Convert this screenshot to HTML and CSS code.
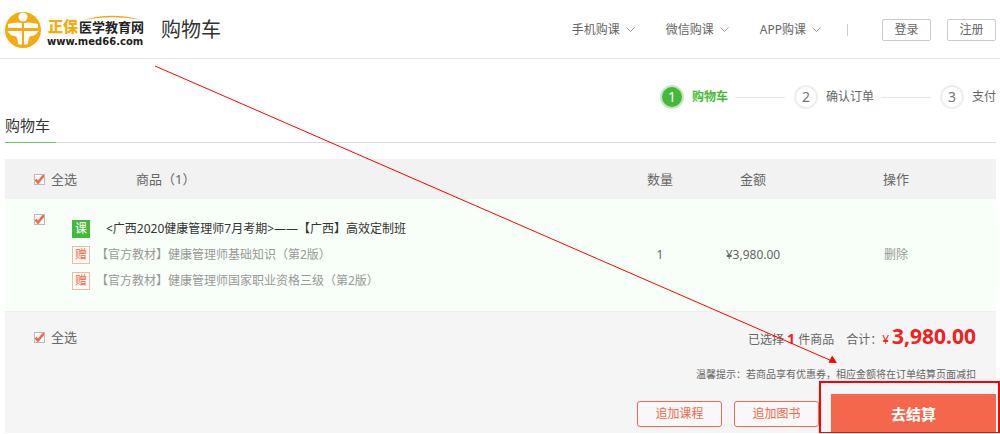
FILE: index.html
```html
<!DOCTYPE html>
<html lang="zh-CN">
<head>
<meta charset="utf-8">
<title>购物车</title>
<meta name="viewport" content="width=device-width, initial-scale=1">
<link rel="stylesheet" href="styles.css">
</head>
<body>
<header class="header">
  <a class="logo" href="#">
    <svg width="140" height="40" viewBox="0 0 140 40" role="img" aria-label="正保医学教育网">
      <circle cx="18" cy="20" r="18" fill="#f5ab0c"/>
      <circle cx="18" cy="7" r="4.500" fill="#fff"/>
      <path d="M3 14 Q8 12.500 13 12.500 Q18 14 23 12.500 Q28 12.500 33 14 V18 H3Z" fill="#fff"/>
      <path d="M2.500 21 H33.500 Q31 26 24.500 26.500 Q23.500 30 22.500 34.500 H13.500 Q12.500 30 11.500 26.500 Q5 26 2.500 21Z" fill="#fff"/>
      <path d="M18 12V36M1 19.500H35" stroke="#f5ab0c" stroke-width="2"/>
      <path d="M75 11 Q105 1 137 10 Q105 4 75 11Z" fill="#f5ab0c"/>
      <text class="logo-brand" x="43" y="22">正保</text>
      <text class="logo-name" x="74" y="22">医学教育网</text>
      <text class="logo-url" x="42" y="35">www.med66.com</text>
    </svg>
  </a>
  <h1 class="header-title">购物车</h1>
  <nav class="nav">
    <a class="nav-link" href="#">手机购课<svg width="9" height="6" viewBox="0 0 9 6"><path d="M.5.5l4 4 4-4"/></svg></a>
    <a class="nav-link" href="#">微信购课<svg width="9" height="6" viewBox="0 0 9 6"><path d="M.5.5l4 4 4-4"/></svg></a>
    <a class="nav-link" href="#">APP购课<svg width="9" height="6" viewBox="0 0 9 6"><path d="M.5.5l4 4 4-4"/></svg></a>
  </nav>
  <div class="account">
    <button class="account-button" type="button">登录</button>
    <button class="account-button" type="button">注册</button>
  </div>
</header>

<main class="page">
  <ol class="steps">
    <li class="step step-active"><span class="step-number">1</span>购物车</li>
    <li class="step"><span class="step-number">2</span>确认订单</li>
    <li class="step"><span class="step-number">3</span>支付</li>
  </ol>

  <div class="section-head"><h2 class="section-title">购物车</h2></div>

  <table class="cart">
    <colgroup>
      <col class="col-check"><col class="col-gap"><col><col class="col-count"><col class="col-price"><col class="col-action">
    </colgroup>
    <thead>
      <tr>
        <th class="cell-left" colspan="2"><label class="check"><input type="checkbox" checked>全选</label></th>
        <th class="cell-name">商品（1）</th>
        <th>数量</th>
        <th>金额</th>
        <th class="cell-action">操作</th>
      </tr>
    </thead>
    <tbody>
      <tr>
        <td class="cell-left cell-top"><input type="checkbox" checked aria-label="选择商品"></td>
        <td class="cell-products" colspan="2">
          <ul class="products">
            <li class="product product-main"><span class="tag tag-course">课</span><a href="#">&lt;广西2020健康管理师7月考期&gt;——【广西】高效定制班</a></li>
            <li class="product"><span class="tag">赠</span><span>【官方教材】健康管理师基础知识（第2版）</span></li>
            <li class="product"><span class="tag">赠</span><span>【官方教材】健康管理师国家职业资格三级（第2版）</span></li>
          </ul>
        </td>
        <td>1</td>
        <td>¥3,980.00</td>
        <td class="cell-action"><button class="remove" type="button">删除</button></td>
      </tr>
    </tbody>
  </table>

  <section class="summary">
    <label class="check"><input type="checkbox" checked>全选</label>
    <div class="checkout">
      <p class="total"><span>已选择 <b class="count">1</b> 件商品</span><span class="sum">合计：<span class="currency">¥</span><strong class="amount">3,980.00</strong></span></p>
      <p class="tip">温馨提示：若商品享有优惠券，相应金额将在订单结算页面减扣</p>
      <div class="actions">
        <button class="add" type="button">追加课程</button>
        <button class="add" type="button">追加图书</button>
        <div class="pay-wrap"><button class="pay" type="button">去结算</button></div>
      </div>
    </div>
  </section>
</main>

<svg class="pointer" width="1000" height="434" viewBox="0 0 1000 434" aria-hidden="true">
  <path d="M155 66L832 361" stroke="#f00" stroke-width="1"/>
  <path d="M837 363l-8.500-.3 3.600-7.200z" fill="#f00"/>
</svg>
</body>
</html>
```

FILE: styles.css
```css
* {
  box-sizing: border-box;
}

body {
  position: relative;
  margin: 0;
  background: #fff;
  color: #666;
  font: 12px/18px "Noto Sans", "Noto Sans CJK SC", sans-serif;
}

h1, h2, p, ul, ol {
  margin: 0;
  padding: 0;
  font-weight: 400;
  list-style: none;
}

a {
  color: inherit;
  text-decoration: none;
}

button {
  padding: 0;
  font: inherit;
  cursor: pointer;
}

/* Header */
.header {
  display: flex;
  align-items: center;
  height: 59px;
  padding: 2px 4px 0 5px;
  border-bottom: 1px solid #e8e8e8;
}

.logo svg {
  display: block;
}

.logo-brand {
  fill: #f5ab0c;
  font: 900 15px "Noto Sans CJK SC", sans-serif;
}

.logo-name {
  fill: #222;
  font: 700 13px "Noto Sans CJK SC", sans-serif;
}

.logo-url {
  fill: #222;
  font: 700 10px "DejaVu Sans", sans-serif;
}

.header-title {
  margin-left: 16px;
  color: #333;
  font-size: 20px;
  line-height: 28px;
}

.nav {
  display: flex;
  gap: 31px;
  margin-left: auto;
}

.nav-link {
  display: flex;
  align-items: center;
  gap: 6px;
}

.nav-link path {
  fill: none;
  stroke: #999;
}

.account {
  display: flex;
  align-items: center;
  gap: 16px;
  margin-left: 26px;
}

.account::before {
  width: 1px;
  height: 12px;
  margin-right: 18px;
  background: #ccc;
  content: "";
}

.account-button {
  width: 49px;
  height: 22px;
  border: 1px solid #ccc;
  border-radius: 2px;
  background: #fff;
  color: #666;
}

/* Order steps */
.page {
  padding: 0 4px 0 5px;
}

.steps {
  display: flex;
  justify-content: flex-end;
  padding-top: 25px;
}

.step {
  display: flex;
  align-items: center;
  height: 26px;
}

.step + .step::before {
  width: 50px;
  height: 1px;
  margin: 0 9px 0 7px;
  background: #e8e8e8;
  content: "";
}

.step-number {
  width: 24px;
  height: 24px;
  margin-right: 8px;
  border: 2px solid #eee;
  border-radius: 50%;
  color: #777;
  font-size: 14px;
  line-height: 20px;
  text-align: center;
}

.step-active {
  color: #4b3;
  font-weight: 700;
}

.step-active .step-number {
  border-color: #c4e8c0;
  background: #45b83c;
  color: #fff;
  font-weight: 400;
}

.section-head {
  display: flex;
  margin-top: 3px;
  border-bottom: 1px solid #ddd;
}

.section-title {
  margin-bottom: -1px;
  padding: 0 6px 5px 0;
  border-bottom: 1px solid #6c6;
  color: #333;
  font-size: 15px;
  line-height: 24px;
}

/* Cart table */
.cart {
  width: 100%;
  margin-top: 16px;
  border-collapse: collapse;
  table-layout: fixed;
  text-align: center;
}

.col-check { width: 67px; }
.col-gap { width: 64px; }
.col-count { width: 92px; }
.col-price { width: 94px; }
.col-action { width: 196px; }

.cart th {
  height: 40px;
  padding: 0;
  background: #f2f2f2;
  font-size: 13px;
  font-weight: 400;
}

.cart td {
  height: 112px;
  padding: 0;
  background: #f8fff8;
}

.cart .cell-left {
  padding-left: 29px;
  text-align: left;
}

.cart .cell-top {
  padding-top: 15px;
  line-height: 12px;
  vertical-align: top;
}

.cart .cell-name,
.cart .cell-products {
  text-align: left;
}

.cart .cell-action {
  padding-right: 4px;
}

input[type="checkbox"] {
  width: 11px;
  height: 11px;
  margin: 0;
  border: 1px solid #bbb;
  background: #fff url("data:image/svg+xml,%3Csvg xmlns='http://www.w3.org/2000/svg' viewBox='0 0 11 11'%3E%3Cpath d='M1.500 5.500L4 8.500 10.500 .5' fill='none' stroke='%23f5674c' stroke-width='2.600'/%3E%3C/svg%3E") center / 11px 11px no-repeat border-box;
  appearance: none;
}

input[type="checkbox"]:not(:checked) {
  background-image: none;
}

.check {
  display: inline-flex;
  align-items: center;
  gap: 6px;
  font-size: 13px;
  line-height: 20px;
}

.products {
  display: grid;
  gap: 8px;
}

.product {
  display: flex;
  align-items: center;
  gap: 6px;
  color: #999;
}

.product-main {
  gap: 16px;
  color: #333;
}

.tag {
  width: 18px;
  height: 18px;
  border: 1px solid #f9b5a6;
  color: #f5674c;
  line-height: 16px;
  text-align: center;
}

.tag-course {
  border-color: #45b83c;
  background: #45b83c;
  color: #fff;
}

.remove {
  border: 0;
  background: none;
  color: #999;
}

/* Totals and actions */
.summary {
  display: flex;
  align-items: flex-start;
  justify-content: space-between;
  padding: 12px 0 0 29px;
  border-top: 1px solid #eee;
  background: #f5f5f5;
}

.summary .check {
  margin-top: 3px;
}

.checkout {
  text-align: right;
}

.total {
  padding-right: 20px;
  line-height: 24px;
}

.sum {
  margin-left: 12px;
}

.currency {
  margin-right: 3px;
  color: #e22;
}

.count,
.amount {
  color: #e22;
}

.count {
  font-size: 14px;
}

.amount {
  font-size: 21px;
}

.tip {
  margin-top: 13px;
  padding-right: 20px;
  font-size: 10px;
}

.actions {
  display: flex;
  align-items: center;
  gap: 12px;
  margin-top: 11px;
}

.add {
  width: 85px;
  height: 26px;
  border: 1px solid #f5674c;
  border-radius: 3px;
  background: #f8f8f8;
  color: #f5674c;
}

.pay-wrap {
  position: relative;
}

.pay-wrap::after {
  position: absolute;
  inset: -13px -4px -1px -12px;
  border: 2px solid #f00;
  content: "";
  pointer-events: none;
}

.pay {
  display: block;
  width: 165px;
  height: 39px;
  border: 0;
  background: #f5674c;
  color: #fff;
  font-size: 15px;
  font-weight: 700;
}

.pointer {
  position: absolute;
  top: 0;
  left: 0;
  pointer-events: none;
}
```
